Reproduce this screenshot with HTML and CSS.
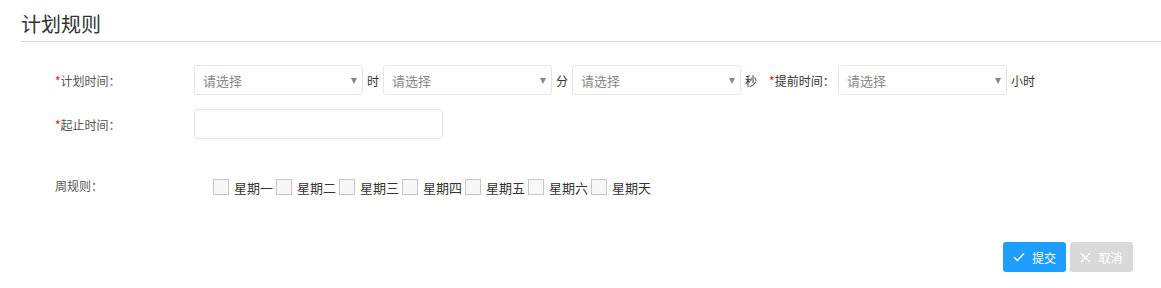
FILE: index.html
```html
<!DOCTYPE html>
<html lang="zh-CN">
<head>
  <meta charset="UTF-8">
  <title>计划规则</title>
  <link rel="stylesheet" href="styles.css">
</head>
<body>
  <div class="panel">
    <div class="title">计划规则</div>

    <div class="form">
      <!-- 计划时间 -->
      <div class="row row-plan">
        <div class="label"><span class="req">*</span>计划时间：</div>
        <div class="select"><span>请选择</span><i class="caret"></i></div>
        <span class="unit">时</span>
        <div class="select"><span>请选择</span><i class="caret"></i></div>
        <span class="unit">分</span>
        <div class="select"><span>请选择</span><i class="caret"></i></div>
        <span class="unit">秒</span>
        <div class="label label-inline"><span class="req">*</span>提前时间：</div>
        <div class="select"><span>请选择</span><i class="caret"></i></div>
        <span class="unit">小时</span>
      </div>

      <!-- 起止时间 -->
      <div class="row row-range">
        <div class="label"><span class="req">*</span>起止时间：</div>
        <div class="text-input"></div>
      </div>

      <!-- 周规则 -->
      <div class="row row-week">
        <div class="label">周规则：</div>
        <div class="week-list">
          <label class="check"><i class="box"></i>星期一</label>
          <label class="check"><i class="box"></i>星期二</label>
          <label class="check"><i class="box"></i>星期三</label>
          <label class="check"><i class="box"></i>星期四</label>
          <label class="check"><i class="box"></i>星期五</label>
          <label class="check"><i class="box"></i>星期六</label>
          <label class="check"><i class="box"></i>星期天</label>
        </div>
      </div>
    </div>

    <div class="actions">
      <button class="btn btn-primary">
        <svg width="12" height="12" viewBox="0 0 12 12"><path d="M1 6.2 L4.4 9.4 L11 2.4" fill="none" stroke="#fff" stroke-width="1.4"/></svg>
        提交
      </button>
      <button class="btn btn-disabled">
        <svg width="11" height="11" viewBox="0 0 11 11"><path d="M1 1 L10 10 M10 1 L1 10" fill="none" stroke="#fff" stroke-width="1.2"/></svg>
        取消
      </button>
    </div>
  </div>
</body>
</html>
```

FILE: styles.css
```css
body {
  margin: 0;
  background: #fff;
  font-family: "Noto Sans CJK SC", "Noto Sans", sans-serif;
  color: #333;
}

.panel {
  padding-left: 21px;
}

.title {
  font-size: 20px;
  line-height: 26px;
  padding-top: 11px;
  padding-bottom: 4px;
  color: #333;
  border-bottom: 1px solid #d5dbd2;
}

.form {
  padding-left: 34px;
  padding-top: 23px;
}

.row {
  display: flex;
  align-items: center;
  height: 30px;
}

.row-range {
  margin-top: 14px;
}

.row-week {
  margin-top: 31px;
}

.label {
  width: 139px;
  flex-shrink: 0;
  font-size: 12px;
  color: #555;
}

.label-inline {
  width: 69px;
  margin-left: 8px;
  color: #333;
}

.req {
  color: #f00;
}

.select {
  width: 169px;
  height: 30px;
  box-sizing: border-box;
  border: 1px solid #e2e6e8;
  border-radius: 3px;
  background: #fff;
  display: flex;
  align-items: center;
  padding-left: 8px;
  position: relative;
  font-size: 13px;
  color: #888;
}

.caret {
  position: absolute;
  right: 5px;
  top: 12px;
  width: 0;
  height: 0;
  border-left: 3px solid transparent;
  border-right: 3px solid transparent;
  border-top: 6px solid #888;
}

.unit {
  font-size: 12px;
  color: #333;
  margin: 0 4px;
}

.text-input {
  width: 249px;
  height: 30px;
  box-sizing: border-box;
  border: 1px solid #e2e6e8;
  border-radius: 3px;
  background: #fff;
}

.week-list {
  display: flex;
  align-items: center;
  padding-left: 19px;
  margin-top: 4px;
}

.check {
  display: flex;
  align-items: center;
  font-size: 13px;
  color: #333;
  margin-right: 3px;
  width: 60px;
}

.box {
  width: 16px;
  height: 16px;
  box-sizing: border-box;
  border: 1px solid #c6c6c6;
  background: #f7f7f7;
  margin-right: 5px;
  flex-shrink: 0;
}

.actions {
  display: flex;
  justify-content: flex-end;
  gap: 4px;
  margin-top: 42px;
  padding-right: 28px;
}

.btn {
  width: 63px;
  height: 30px;
  border: none;
  border-radius: 3px;
  color: #fff;
  font-family: inherit;
  font-size: 12px;
  display: flex;
  align-items: center;
  justify-content: center;
  gap: 7px;
  padding: 0;
}

.btn-primary {
  background: #1e9fff;
}

.btn-disabled {
  background: #d9d9d9;
}
```
